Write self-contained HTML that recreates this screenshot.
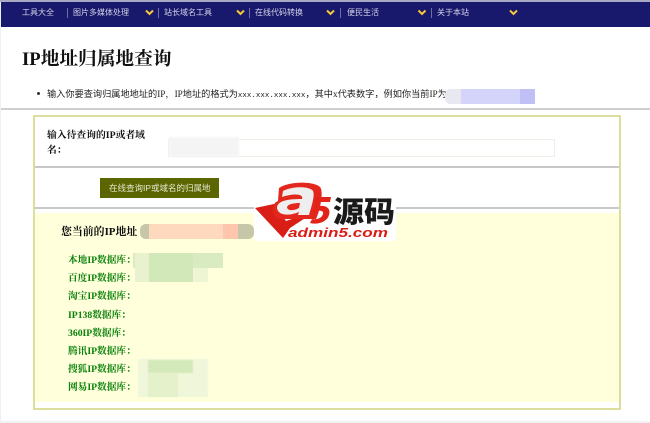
<!DOCTYPE html>
<html lang="zh">
<head>
<meta charset="utf-8">
<title>IP地址归属地查询</title>
<style>
html,body{margin:0;padding:0;background:#fff;}
body{width:650px;height:423px;position:relative;overflow:hidden;font-family:"Liberation Sans","Noto Sans CJK SC",sans-serif;color:#222;}
.a{position:absolute;white-space:nowrap;}
.blur{filter:blur(.3px);}
.nav{font-size:8px;line-height:10px;top:8px;color:#d5d5e8;}
.sep{position:absolute;top:8px;width:1px;height:10px;background:#6f6fa0;}
.ser{font-family:"Liberation Serif","Noto Serif CJK SC",serif;}
.lab{left:68px;font-size:9.700px;line-height:12px;font-weight:700;color:#0a820a;font-family:"Liberation Serif","Noto Serif CJK SC",serif;}
.p{position:absolute;}
</style>
</head>
<body>
<!-- page frame -->
<div class="p" style="left:0;top:0;width:1px;height:423px;background:#eeeef6"></div>
<div class="p" style="left:0;top:421px;width:650px;height:2px;background:#f2f2f2"></div>
<!-- nav -->
<div class="p" style="left:0;top:0;width:650px;height:2px;background:#a9a9c4"></div>
<div class="p" style="left:1px;top:2px;width:649px;height:25px;background:#18186c"></div>
<div class="a nav blur" style="left:22px">工具大全</div>
<div class="sep" style="left:67px"></div>
<div class="a nav blur" style="left:73px">图片多媒体处理</div>
<div class="sep" style="left:158px"></div>
<div class="a nav blur" style="left:164px">站长域名工具</div>
<div class="sep" style="left:249px"></div>
<div class="a nav blur" style="left:255px">在线代码转换</div>
<div class="sep" style="left:340px"></div>
<div class="a nav blur" style="left:347px">便民生活</div>
<div class="sep" style="left:431px"></div>
<div class="a nav blur" style="left:437px">关于本站</div>
<svg class="p" style="left:0;top:0" width="650" height="27" fill="none" stroke="#f5c93a" stroke-width="2">
<path d="M146 10.5l3.5 3.5 3.5-3.5"/><path d="M237 10.5l3.5 3.5 3.5-3.5"/><path d="M327 10.5l3.5 3.5 3.5-3.5"/><path d="M418.500 10.500l3.500 3.500 3.500-3.500"/><path d="M510 10.500l3.500 3.500 3.500-3.500"/>
</svg>
<!-- title -->
<div class="a ser blur" style="left:22px;top:48px;font-size:18.700px;line-height:24px;font-weight:700;color:#111">IP地址归属地查询</div>
<!-- intro -->
<div class="p" style="left:37px;top:91.500px;width:3px;height:3px;border-radius:50%;background:#333"></div>
<div class="a blur" style="left:47px;top:88px;font-size:9.200px;line-height:12px;color:#222">输入你要查询归属地地址的<span class="ser">IP，IP</span>地址的格式为<span style="font-family:'Liberation Mono',monospace;font-size:7.500px">xxx.xxx.xxx.xxx</span>，其中<span class="ser">x</span>代表数字，例如你当前<span class="ser">IP</span>为</div>
<div class="p" style="left:445px;top:89px;width:90px;height:15px;background:#d4d4fa;border-radius:6px 0 0 6px"></div>
<div class="p" style="left:445px;top:89px;width:16px;height:15px;background:#e8e8f0;border-radius:6px 0 0 6px"></div>
<div class="p" style="left:520px;top:89px;width:15px;height:15px;background:#c0c0f6"></div>
<div class="p" style="left:1px;top:108px;width:649px;height:2px;background:#cfcfcf"></div>
<!-- panel -->
<div class="p" style="left:33px;top:115px;width:584px;height:291px;border:2px solid #dcdf9c;background:#fff"></div>
<div class="a ser blur" style="left:47px;top:128px;font-size:9.800px;line-height:15px;font-weight:700;color:#111">输入待查询的IP或者域<br>名：</div>
<div class="p" style="left:168px;top:139px;width:385px;height:16px;border:1px solid #efefe8;background:#fff"></div>
<div class="p" style="left:169px;top:137px;width:70px;height:19px;background:#f4f4f4;filter:blur(1px)"></div>
<div class="p" style="left:35px;top:166px;width:584px;height:2px;background:#c8c8c8"></div>
<div class="p" style="left:100px;top:178px;width:119px;height:20px;background:#5b6600"></div>
<div class="a blur" style="left:109px;top:183px;font-size:8.500px;line-height:11px;color:#e6e6d0">在线查询IP或域名的归属地</div>
<div class="p" style="left:35px;top:207px;width:584px;height:2px;background:#c8c8c8"></div>
<div class="p" style="left:35px;top:213px;width:584px;height:189px;background:#ffffdc"></div>
<div class="a ser blur" style="left:61px;top:226px;font-size:10.900px;line-height:13px;font-weight:700;color:#111">您当前的IP地址</div>
<div class="p" style="left:140px;top:224px;width:114px;height:15px;background:#c6c6a8;border-radius:6px"></div>
<div class="p" style="left:149px;top:224px;width:89px;height:15px;background:#ffd9bd"></div>
<div class="p" style="left:223px;top:224px;width:15px;height:15px;background:#ffc6ae"></div>
<!-- mosaic -->
<div class="p" style="left:133px;top:253px;width:90px;height:15px;background:#d9ebc0"></div>
<div class="p" style="left:135px;top:253px;width:14px;height:29px;background:#e8f2cf"></div>
<div class="p" style="left:149px;top:253px;width:44px;height:29px;background:#d2e8b8"></div>
<div class="p" style="left:193px;top:268px;width:15px;height:14px;background:#eef5d2"></div>
<div class="p" style="left:138px;top:359px;width:70px;height:38px;background:#eff6da;filter:blur(.6px)"></div>
<div class="p" style="left:148px;top:360px;width:45px;height:13px;background:#d4e9ba;filter:blur(.6px)"></div>
<div class="p" style="left:148px;top:373px;width:30px;height:24px;background:#e4f1ca"></div>
<!-- labels -->
<div class="a lab blur" style="top:255px">本地IP数据库：</div>
<div class="a lab blur" style="top:273px">百度IP数据库：</div>
<div class="a lab blur" style="top:291px">淘宝IP数据库：</div>
<div class="a lab blur" style="top:310px">IP138数据库：</div>
<div class="a lab blur" style="top:328px">360IP数据库：</div>
<div class="a lab blur" style="top:346px">腾讯IP数据库：</div>
<div class="a lab blur" style="top:364px">搜狐IP数据库：</div>
<div class="a lab blur" style="top:382px">网易IP数据库：</div>
<!-- watermark logo -->
<svg class="p" style="left:254px;top:181px" width="142" height="60" viewBox="0 0 142 60">
<rect x="0" y="26" width="142" height="34" fill="#fff"/>
<path d="M1 27 L20 23 L32 40 L62 30 L36 47 L29 57 Z" fill="#d81e16"/>
<path d="M25 7 C35 0 60 0 66 6 C70 10 66 30 62 38 L24 38 C16 32 18 22 24 20 Z" fill="#e4271c"/>
<path d="M29 10 C38 5 56 5 59 10 C61 14 58 24 55 34 L44 34 L45 31 C36 35 24 35 23 27 C23 20 33 18 48 18 C50 13 40 12 28 16 Z" fill="#eee"/>
<path d="M33 26 C34 23 40 22 46 22 L45 27 C40 30 33 30 33 26Z" fill="#e4271c"/>
<path d="M62 16 L77 16 L76 21 L66 21 L65 25 C73 24 77 28 75 34 C73 41 64 44 56 42 L58 38 C63 39 68 37 69 33 C70 29 64 29 59 31 Z" fill="#e2231a"/>
<text x="79" y="41" font-family="'Noto Sans CJK SC',sans-serif" font-size="29" font-weight="900" fill="#1a1a1a" textLength="62" lengthAdjust="spacingAndGlyphs">源码</text>
<text x="34" y="56" font-family="'Liberation Sans',sans-serif" font-size="13" font-weight="700" font-style="italic" fill="#d81e16" textLength="100" lengthAdjust="spacingAndGlyphs">admin5.com</text>
</svg>
</body>
</html>
